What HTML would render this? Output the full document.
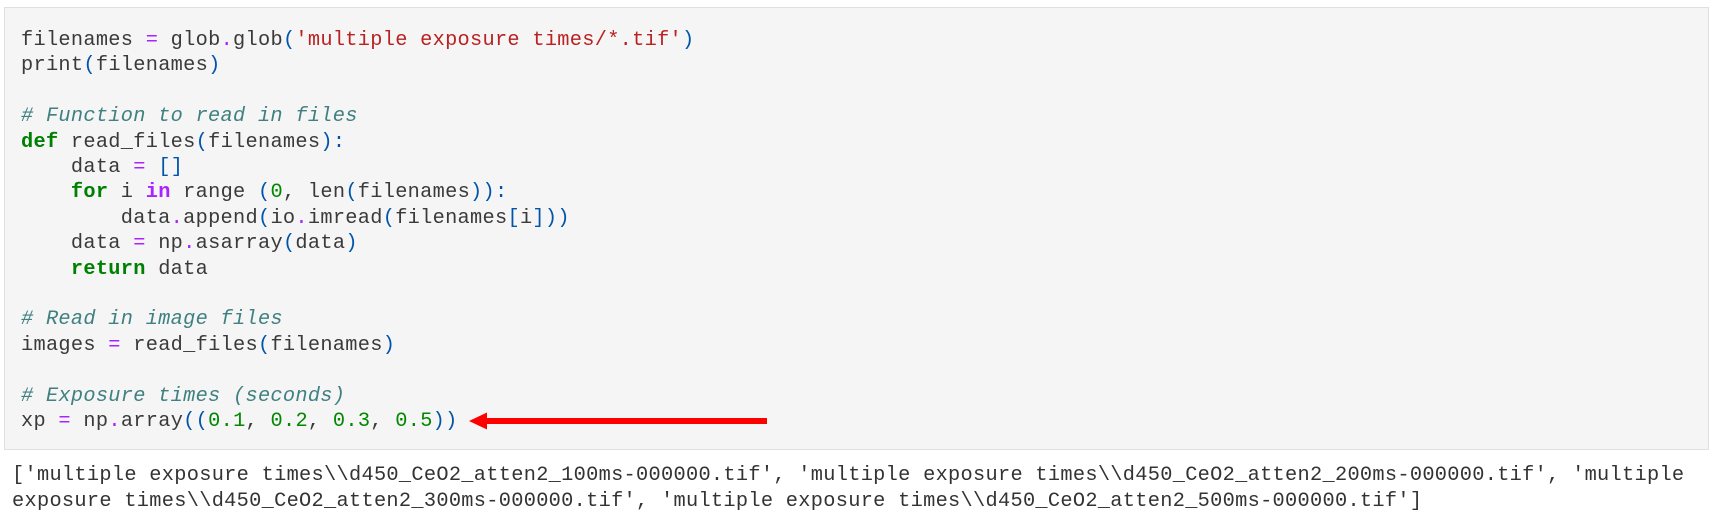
<!DOCTYPE html>
<html><head><meta charset="utf-8"><style>
html,body{margin:0;padding:0;background:#fff;width:1720px;height:529px;overflow:hidden;}
.box{position:absolute;left:4px;top:7px;width:1703px;height:441px;background:#f5f5f5;border:1px solid #e0e0e0;}
pre{margin:0;font-family:"Liberation Mono",monospace;font-size:20.3px;line-height:25.4px;color:#3a3a3a;white-space:pre;}
.code{position:absolute;left:21px;top:28px;letter-spacing:0.3px;}
.out{position:absolute;left:12px;top:463px;line-height:26px;color:#333;letter-spacing:0.31px;}
.k{color:#008000;font-weight:bold}
.o{color:#aa22ff}
.s{color:#ba2121}
.c{color:#408080;font-style:italic}
.n{color:#080}
.p{color:#0055aa}
</style></head><body>
<div class="box"></div>
<pre class="code">filenames <span class="o">=</span> glob<span class="o">.</span>glob<span class="p">(</span><span class="s">'multiple exposure times/*.tif'</span><span class="p">)</span>
print<span class="p">(</span>filenames<span class="p">)</span>

<span class="c"># Function to read in files</span>
<span class="k">def</span> read_files<span class="p">(</span>filenames<span class="p">):</span>
    data <span class="o">=</span> <span class="p">[]</span>
    <span class="k">for</span> i <span class="o" style="font-weight:bold">in</span> range <span class="p">(</span><span class="n">0</span>, len<span class="p">(</span>filenames<span class="p">)):</span>
        data<span class="o">.</span>append<span class="p">(</span>io<span class="o">.</span>imread<span class="p">(</span>filenames<span class="p">[</span>i<span class="p">]))</span>
    data <span class="o">=</span> np<span class="o">.</span>asarray<span class="p">(</span>data<span class="p">)</span>
    <span class="k">return</span> data

<span class="c"># Read in image files</span>
images <span class="o">=</span> read_files<span class="p">(</span>filenames<span class="p">)</span>

<span class="c"># Exposure times (seconds)</span>
xp <span class="o">=</span> np<span class="o">.</span>array<span class="p">((</span><span class="n">0.1</span>, <span class="n">0.2</span>, <span class="n">0.3</span>, <span class="n">0.5</span><span class="p">))</span></pre>
<svg style="position:absolute;left:0;top:0" width="1720" height="529"><rect x="485" y="418" width="282" height="6" fill="#ff0000"/><polygon points="469,421 487,412.5 487,429.5" fill="#ff0000"/></svg>
<pre class="out">['multiple exposure times\\d450_CeO2_atten2_100ms-000000.tif', 'multiple exposure times\\d450_CeO2_atten2_200ms-000000.tif', 'multiple
exposure times\\d450_CeO2_atten2_300ms-000000.tif', 'multiple exposure times\\d450_CeO2_atten2_500ms-000000.tif']</pre>
</body></html>
